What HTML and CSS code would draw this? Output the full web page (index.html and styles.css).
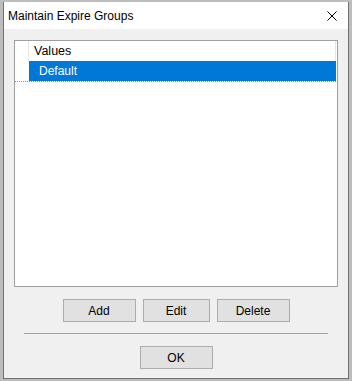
FILE: index.html
```html
<!DOCTYPE html>
<html lang="en">
<head>
  <meta charset="UTF-8">
  <title>Maintain Expire Groups</title>
  <link rel="stylesheet" href="styles.css">
</head>
<body>

  <div class="window">
    <div class="titlebar">
      <span class="title">Maintain Expire Groups</span>
      <svg class="close" width="10" height="10" viewBox="0 0 10 10">
        <path d="M0.5 0.5 L9.5 9.5 M9.5 0.5 L0.5 9.5" stroke="#000" stroke-width="1" fill="none"/>
      </svg>
    </div>

    <div class="panel">
      <div class="listbox">
        <div class="row header">
          <div class="gutter"></div>
          <div class="cell">Values</div>
        </div>
        <div class="row selected">
          <div class="gutter"></div>
          <div class="cell">Default</div>
        </div>
      </div>

      <div class="buttons">
        <button class="btn wide">Add</button>
        <button class="btn">Edit</button>
        <button class="btn wide">Delete</button>
      </div>

      <hr class="separator">

      <div class="buttons ok-row">
        <button class="btn wide">OK</button>
      </div>
    </div>
  </div>

</body>
</html>
```

FILE: styles.css
```css
body {
  margin: 0;
  background: #bdbdbd;
  font-family: "Liberation Sans", Arial, sans-serif;
  font-size: 12px;
  color: #000;
  padding: 2px 3px 3px 3px;
  height: 381px;
  box-sizing: border-box;
}
.window {
  height: 100%;
  border: 1px solid #707070;
  border-top: none;
  display: flex;
  flex-direction: column;
  background: #f0f0f0;
}
.titlebar {
  height: 27px;
  background: #fff;
  display: flex;
  align-items: center;
  justify-content: space-between;
  padding: 0 11px 0 4px;
}
.title {
  margin-top: 1px;
}
.close {
  display: block;
}
.panel {
  flex: 1;
  padding: 11px 10px 0 10px;
  display: flex;
  flex-direction: column;
}
.listbox {
  height: 247px;
  box-sizing: border-box;
  border: 1px solid #a0a0a0;
  background: #fff;
}
.row {
  display: flex;
  height: 20px;
}
.gutter {
  width: 13px;
}
.cell {
  width: 307px;
  line-height: 20px;
  box-sizing: border-box;
}
.header .cell {
  border-left: 1px solid #e5e5e5;
  border-right: 1px solid #e5e5e5;
  padding-left: 5px;
  width: 308px;
  font-size: 12.5px;
}
.selected {
  border-bottom: 1px dotted #8c8c8c;
  margin-right: 1px;
}
.selected .gutter {
  width: 14px;
}
.selected .cell {
  background: #0078d7;
  color: #fff;
  padding-left: 10px;
  line-height: 21px;
}
.buttons {
  display: flex;
  justify-content: center;
  gap: 7px;
  margin-top: 12px;
}
.btn {
  width: 67px;
  height: 23px;
  padding: 0;
  font: inherit;
  color: #000;
  background: #e1e1e1;
  border: 1px solid #adadad;
}
.btn.wide {
  width: 73px;
}
.separator {
  width: 304px;
  margin: 11px auto 0 auto;
  border: none;
  border-top: 1px solid #a0a0a0;
  height: 0;
}
.ok-row {
  margin-top: 12px;
}
```
